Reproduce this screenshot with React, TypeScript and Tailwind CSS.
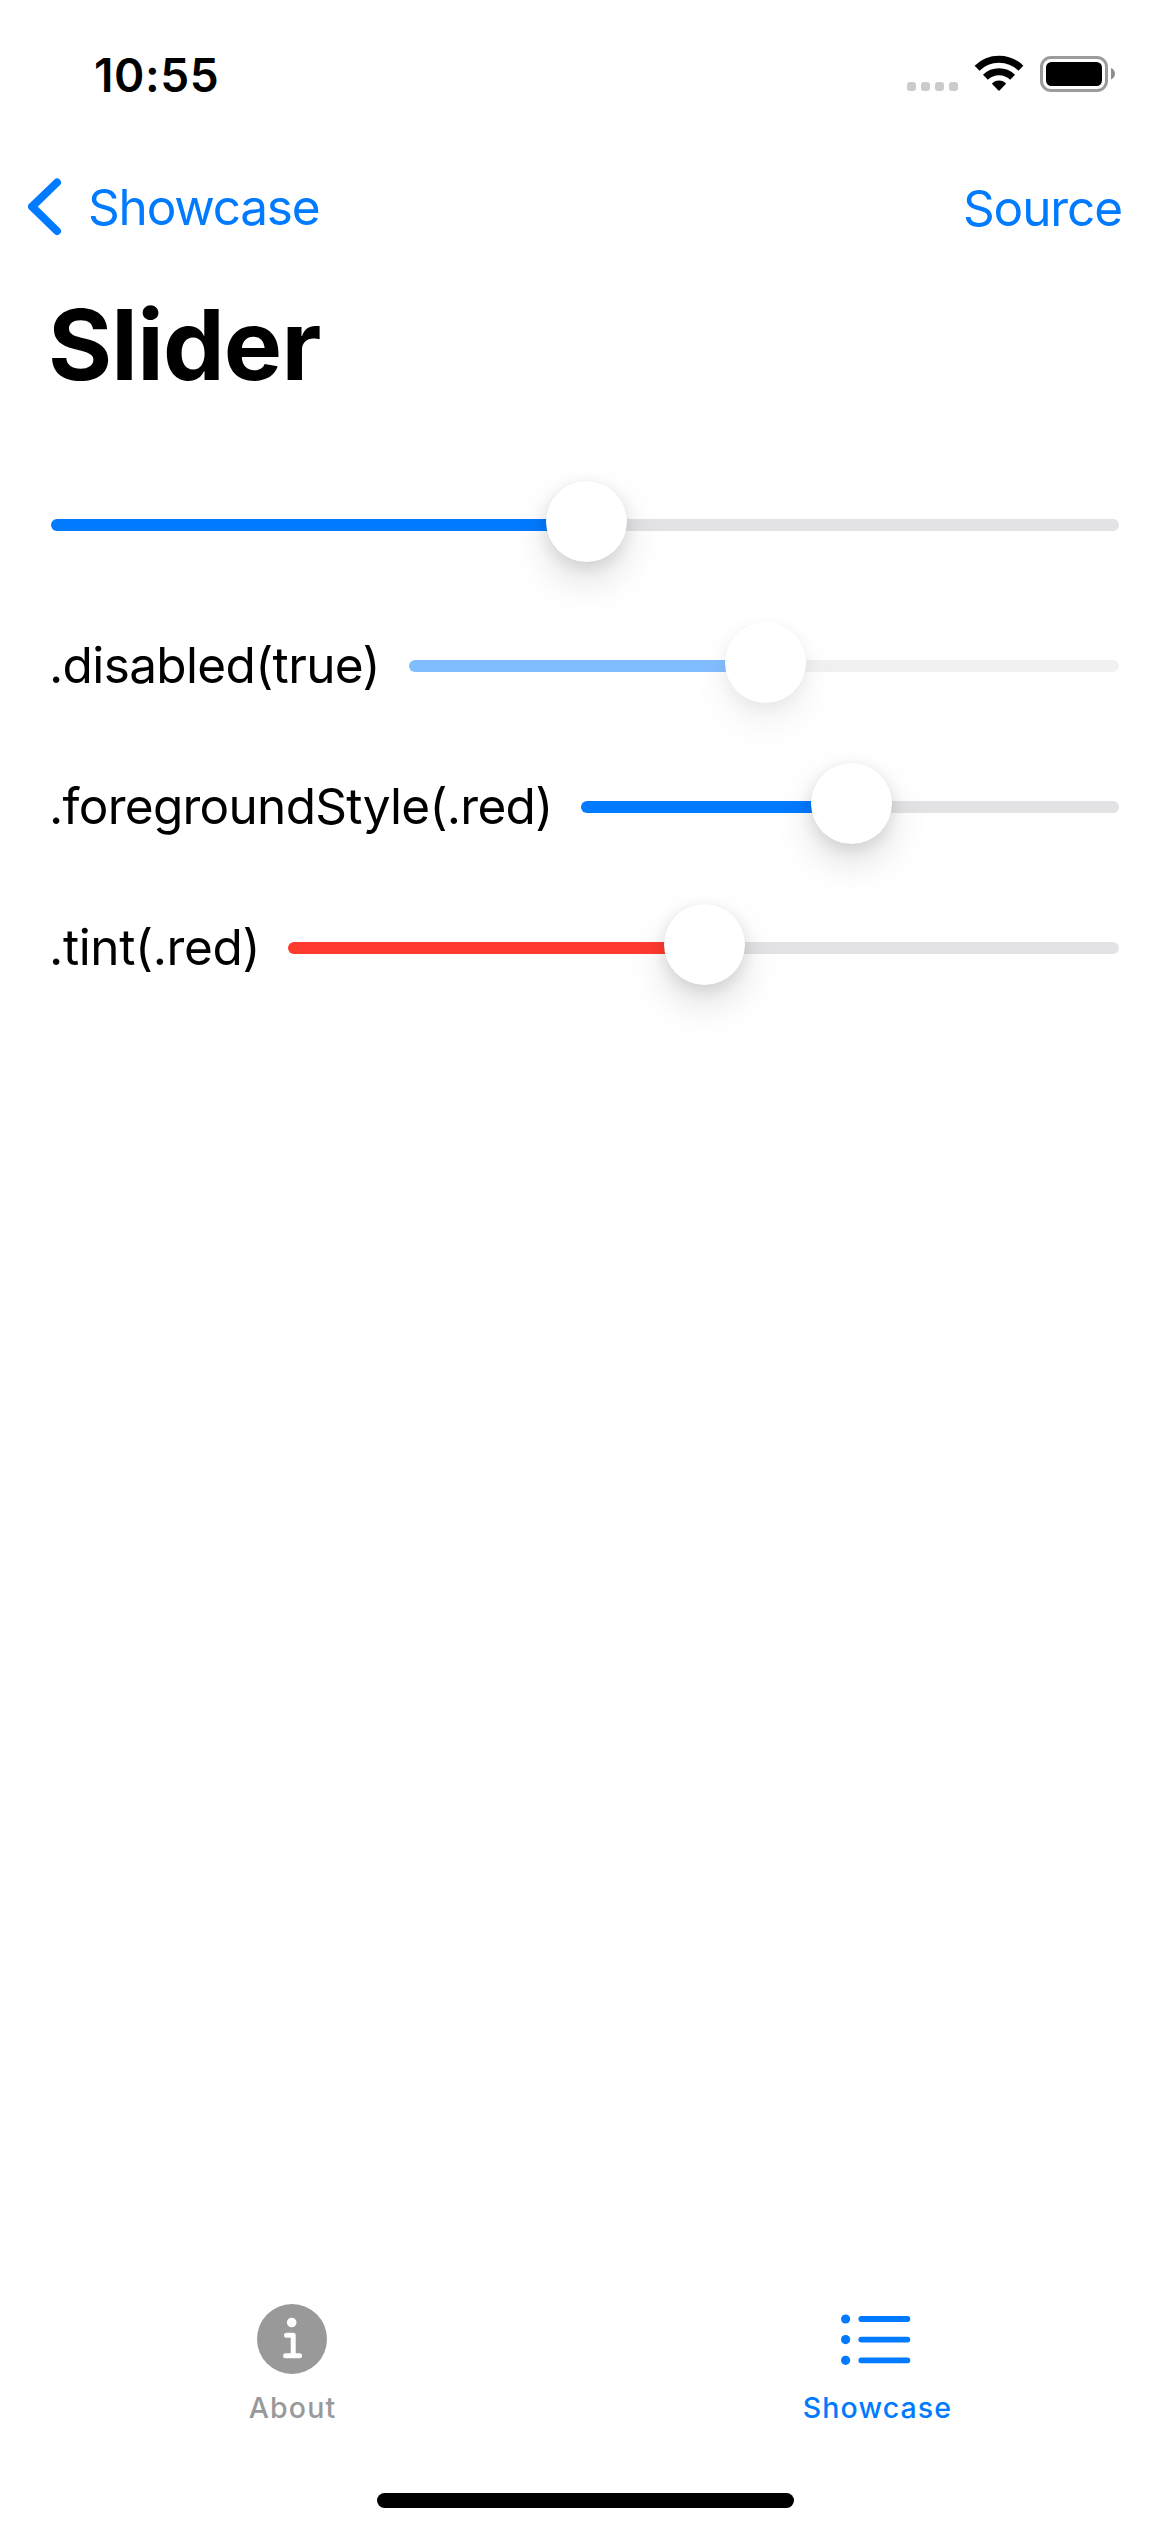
import React from "react";

type SliderProps = { track: string; disabled?: boolean };

function Slider({ track, disabled = false }: SliderProps) {
  return (
    <div className={disabled ? "flex h-[81px] min-w-0 flex-1 items-center opacity-50" : "flex h-[81px] min-w-0 flex-1 items-center"}>
      <div className={`-mr-[3px] mt-[7px] h-3 flex-1 rounded-l-full ${track}`} />
      <div className="z-10 h-[81px] w-[81px] shrink-0 rounded-full bg-white shadow-[0_18px_39px_rgba(0,0,0,0.13),0_5px_18px_rgba(0,0,0,0.11),0_0_2px_rgba(0,0,0,0.06)]" />
      <div className="-ml-[5px] mt-[7px] h-3 flex-1 rounded-r-full bg-[#e3e3e5]" />
    </div>
  );
}

function StatusIcons() {
  return (
    <svg width="210" height="40" viewBox="906 54 210 40" className="block">
      <g fill="#cbcbcb">
        <rect x="907" y="82" width="9" height="9" rx="3" />
        <rect x="921" y="82" width="9" height="9" rx="3" />
        <rect x="935" y="82" width="9" height="9" rx="3" />
        <rect x="949" y="82" width="9" height="9" rx="3" />
      </g>
      <g fill="none" stroke="#000">
        <path d="M977.1 68.2a31.2 31.2 0 0 1 43.8 0" strokeWidth="7" />
        <path d="M985.4 77.2a19.6 19.6 0 0 1 27.2 0" strokeWidth="7" />
      </g>
      <path d="M992.4 84.2c-.5-.5-.5-.9 0-1.3a10.4 10.4 0 0 1 13.2 0c.5.4.5.8 0 1.3l-5.8 6.1q-.8.8-1.6 0z" />
      <rect x="1041.5" y="57.5" width="65" height="33" rx="9.5" fill="none" stroke="#9b9b9b" strokeWidth="3" />
      <rect x="1046" y="62" width="56" height="24" rx="5.5" />
      <path d="M1111 68c2.500 1 4 3.200 4 5.700s-1.500 4.700-4 5.700z" fill="#8e8e8e" />
    </svg>
  );
}

export default function App() {
  return (
    <div className="flex h-[2532px] w-[1170px] flex-col overflow-hidden bg-white font-['Inter',sans-serif] text-black">
      <header className="flex h-[141px] shrink-0 items-start justify-between pl-[94px] pr-[54px] pt-[54px]">
        <span className="mt-[-7px] text-[46px] font-semibold leading-[56px] tracking-[0.6px]">10:55</span>
        <StatusIcons />
      </header>

      <nav className="flex h-[132px] shrink-0 items-center justify-between pl-7 pr-[48px] text-[#007aff]">
        <button className="flex items-center">
          <svg width="34" height="58" viewBox="0 0 34 58" fill="none" stroke="currentColor" strokeWidth="8" strokeLinecap="round" strokeLinejoin="round">
            <path d="M29 4.500 4 28.700 29 53" />
          </svg>
          <span className="ml-[26px] text-[49.5px] leading-[60px] tracking-[-1.2px]">Showcase</span>
        </button>
        <button className="pt-[2px] text-[49.5px] leading-[60px] tracking-[-1.1px]">Source</button>
      </nav>

      <h1 className="ml-[48px] mt-[12px] text-[98px] font-bold leading-[120px] tracking-[-0.8px]">Slider</h1>

      <main className="mt-[76px] flex flex-1 flex-col gap-[60px] px-[51px] text-[49.5px] leading-[60px]">
        <div className="flex">
          <Slider track="bg-[#007aff]" />
        </div>
        <div className="flex items-center">
          <span className="-ml-[2px] w-[360px] shrink-0 whitespace-nowrap pt-1 tracking-[-0.64px]">.disabled(true)</span>
          <Slider track="bg-[#007aff]" disabled />
        </div>
        <div className="flex items-center">
          <span className="-ml-[2px] w-[532px] shrink-0 whitespace-nowrap pt-1 tracking-[-0.72px]">.foregroundStyle(.red)</span>
          <Slider track="bg-[#007aff]" />
        </div>
        <div className="flex items-center">
          <span className="-ml-[2px] w-[239px] shrink-0 whitespace-nowrap pt-1 tracking-[-0.38px]">.tint(.red)</span>
          <Slider track="bg-[#ff3b30]" />
        </div>
      </main>

      <footer className="flex h-[234px] shrink-0 flex-col items-center">
        <div className="flex w-full">
          <button className="flex flex-1 flex-col items-center text-[#999999]">
            <svg className="mr-px mt-[6px]" width="70" height="70" viewBox="0 0 70 70">
              <circle cx="35" cy="35" r="35" fill="currentColor" />
              <circle cx="34.700" cy="18.500" r="4.800" fill="#fff" />
              <path d="M29.500 31.200H36.200V51.800M28.600 51.800H42.600" fill="none" stroke="#fff" strokeWidth="5" strokeLinecap="round" strokeLinejoin="round" />
            </svg>
            <span className="mt-[17px] text-[28.5px] font-medium leading-[34px] tracking-[1.1px]">About</span>
          </button>
          <button className="flex flex-1 flex-col items-center text-[#007aff]">
            <svg className="mr-[3px] mt-[6px]" width="70" height="70" viewBox="0 0 70 70" fill="currentColor">
              <circle cx="4.600" cy="15" r="4.600" />
              <circle cx="4.600" cy="35.600" r="4.600" />
              <circle cx="4.600" cy="56.300" r="4.600" />
              <path d="M20.300 15H66.400M20.300 35.600H66.400M20.300 56.300H66.400" stroke="currentColor" strokeWidth="5.800" strokeLinecap="round" />
            </svg>
            <span className="mt-[17px] text-[28.5px] font-medium leading-[34px] tracking-[1.1px]">Showcase</span>
          </button>
        </div>
        <div className="mt-[68px] h-[15px] w-[417px] rounded-full bg-black" />
      </footer>
    </div>
  );
}
